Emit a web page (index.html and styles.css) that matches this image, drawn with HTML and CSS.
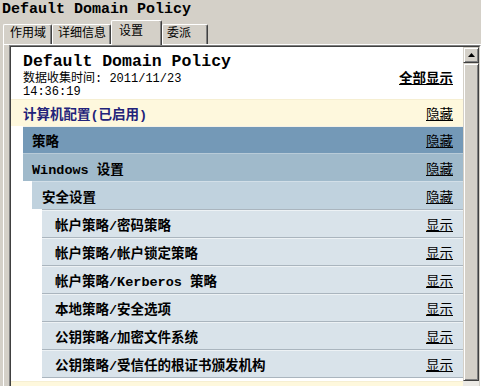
FILE: index.html
```html
<!DOCTYPE html>
<html>
<head>
    <meta charset="utf-8"/>
    <link rel="stylesheet" href="styles.css">
</head>
<body>
<div class="title">Default Domain Policy</div>
<div class="tabs">
    <div class="tab t1">作用域</div>
    <div class="tab t2">详细信息</div>
    <div class="tab t3 active">设置</div>
    <div class="tab t4">委派</div>
</div>
<div class="panel">
    <div class="frame">
        <div class="view">
            <div class="report">
                <div class="rhead">
                    <div class="rtitle">Default Domain Policy</div>
                    <div class="rmeta">
                        <div>数据收集时间: 2011/11/23<br>14:36:19</div>
                        <a class="showall">全部显示</a>
                    </div>
                </div>

                <!-- 计算机配置 -->
                <div class="head he0"><span>计算机配置(已启用)</span><a>隐藏</a></div>
                <div class="body b0">
                    <div class="head he1"><span>策略</span><a>隐藏</a></div>
                    <div class="head he2"><span>Windows 设置</span><a>隐藏</a></div>
                    <div class="body b2">
                        <div class="head he3"><span>安全设置</span><a>隐藏</a></div>
                        <div class="body b3">
                            <div class="head he4"><span>帐户策略/密码策略</span><a>显示</a></div>
                            <div class="head he4"><span>帐户策略/帐户锁定策略</span><a>显示</a></div>
                            <div class="head he4"><span>帐户策略/Kerberos 策略</span><a>显示</a></div>
                            <div class="head he4"><span>本地策略/安全选项</span><a>显示</a></div>
                            <div class="head he4"><span>公钥策略/加密文件系统</span><a>显示</a></div>
                            <div class="head he4"><span>公钥策略/受信任的根证书颁发机构</span><a>显示</a></div>
                        </div>
                    </div>
                </div>

                <!-- 用户配置 (只露出顶边) -->
                <div class="head he0 next"></div>
            </div>
            <div class="scrollbar">
                <div class="sb-btn">
                    <svg width="7" height="4" viewBox="0 0 7 4"><path d="M3.5 0L7 4H0z" fill="#000"/></svg>
                </div>
                <div class="sb-thumb"></div>
            </div>
        </div>
    </div>
</div>
</body>
</html>
```

FILE: styles.css
```css
* {
    box-sizing: border-box;
}

body {
    margin: 0;
    height: 386px;
    overflow: hidden;
    background: #d4d0c8;
    font-family: "Liberation Mono", "Noto Sans CJK SC", monospace;
    font-size: 12px;
    color: #000;
}

.title {
    height: 20px;
    line-height: 20px;
    padding-left: 2px;
    font-size: 15px;
    font-weight: bold;
}

/* 选项卡 */
.tabs {
    display: flex;
    align-items: flex-end;
    height: 24px;
    padding-left: 3px;
    position: relative;
    z-index: 1;
}

.tab {
    height: 20px;
    padding: 2px 0 0 6px;
    line-height: 15px;
    background: #d4d0c8;
    border-top: 1px solid #fff;
    border-left: 1px solid #fff;
    border-right: 1px solid #404040;
    box-shadow: inset -1px 0 #808080;
    border-radius: 2px 2px 0 0;
}

.t1 { width: 49px; }
.t2 { width: 59px; padding-left: 5px; }
.t3 { width: 51px; }
.t4 { width: 46px; padding-left: 4px; }

.tab.active {
    height: 25px;
    margin-bottom: -1px;
    padding-top: 4px;
    padding-left: 7px;
}

.panel {
    margin-left: 3px;
    border-top: 1px solid #fff;
    border-left: 1px solid #fff;
    padding-left: 5px;
}

.frame {
    height: 400px;
    border: 1px solid;
    border-color: #808080 #fff #fff #808080;
}

.view {
    display: flex;
    height: 100%;
    background: #fff;
    border: 1px solid;
    border-color: #404040 #d4d0c8 #d4d0c8 #404040;
}

/* 报告 */
.report {
    flex: 1;
    min-width: 0;
}

.rhead {
    height: 52px;
    padding: 6px 10px 0 12px;
}

.rtitle {
    font-size: 16.5px;
    font-weight: bold;
    line-height: 18px;
}

.rmeta {
    display: flex;
    justify-content: space-between;
    align-items: flex-start;
    margin-top: 2px;
    line-height: 12.5px;
}

.showall {
    font-size: 13.5px;
    font-weight: bold;
    text-decoration: underline;
    line-height: 13px;
}

.head {
    display: flex;
    justify-content: space-between;
    align-items: center;
    height: 28px;
    padding-right: 10px;
    font-size: 13.5px;
    font-weight: bold;
}

.head a {
    font-weight: normal;
    text-decoration: underline;
}

.he0 {
    height: 27px;
    padding-left: 12px;
    background: #fef8dd;
    border-top: 1px solid #f6efd2;
}

.he0 span {
    color: #23237a;
}

.b0 {
    padding-left: 12px;
}

.he1 {
    height: 27px;
    padding-left: 9px;
    background: #7499b7;
    border-top: 1px solid #f4f1e6;
}

.he2 {
    padding-left: 9px;
    background: #a0bacb;
    border-top: 1px solid #b8cbd8;
}

.b2 {
    padding-left: 9px;
}

.he3 {
    padding-left: 10px;
    background: #c0d2de;
    border-top: 1px solid #d2dfe8;
}

.b3 {
    padding-left: 10px;
    padding-bottom: 1px;
}

.he4 {
    padding-left: 13px;
    background: #d9e3ea;
    border-top: 1px solid #aab5be;
    box-shadow: inset 0 1px #edf2f5;
}

.he4:last-child {
    border-bottom: 1px solid #aab5be;
    height: 29px;
}

.next {
    margin-top: 2px;
}

/* 滚动条 */
.scrollbar {
    width: 16px;
    background: #eceae5;
}

.sb-btn, .sb-thumb {
    background: #d4d0c8;
    border: 1px solid;
    border-color: #d4d0c8 #404040 #404040 #d4d0c8;
    box-shadow: inset 1px 1px #fff, inset -1px -1px #808080;
}

.sb-btn {
    display: flex;
    align-items: center;
    justify-content: center;
    height: 16px;
}

.sb-thumb {
    height: 318px;
}
```
